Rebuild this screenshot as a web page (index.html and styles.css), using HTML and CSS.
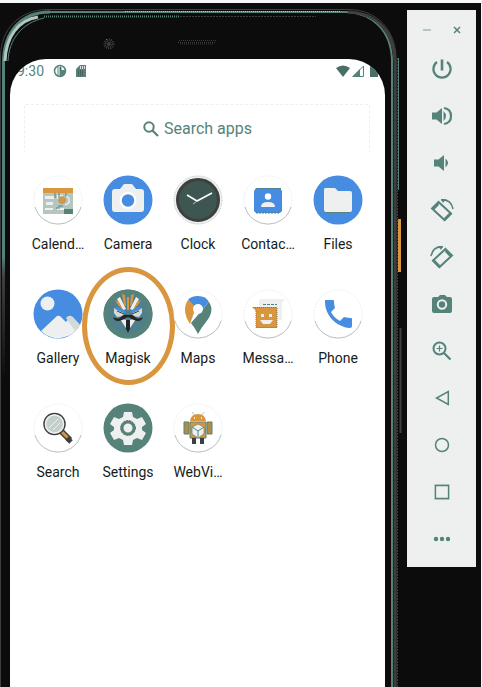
FILE: index.html
```html
<!DOCTYPE html>
<html lang="en">
<head>
<meta charset="utf-8">
<meta name="viewport" content="width=device-width, initial-scale=1">
<title>Android Emulator</title>
<link rel="stylesheet" href="styles.css">
</head>
<body>
<div class="desk">
  <div class="phone">
    <svg class="bezel" viewBox="0 0 407 684" aria-hidden="true" fill="none">
      <defs>
        <linearGradient id="fade" x1="0" y1="0" x2="0" y2="684" gradientUnits="userSpaceOnUse">
          <stop offset="0" stop-color="#55837a"/><stop offset=".37" stop-color="#55837a"/><stop offset=".4" stop-color="#3f3f3f"/><stop offset=".55" stop-color="#0c0c0c"/>
        </linearGradient>
      </defs>
      <path d="M.5 684V54C.5 26 20 6.500 48 6.500H348C378 6.500 396 28 396 56V684" stroke="#3f3f3f"/>
      <path d="M3.500 400V60C3.500 29 21 9 50 9" stroke="url(#fade)" stroke-width="3"/>
      <path d="M48 9H346C372 10 391 27 392 57V684" stroke="#55837a" stroke-width="2"/>
      <path d="M125 8.500H340" stroke="#b5c5c0" stroke-dasharray="1 1"/>
      <path d="M348 9C378 10 394 30 395 58V684" stroke="#3f3f3f" stroke-width="3"/>
      <path d="M397.500 684V54" stroke="#3f3f3f" stroke-dasharray="2 1"/>
      <path d="M398.500 55V187" stroke="#55837a"/>
      <path d="M44 13.500H180" stroke="#55837a" stroke-width="2" stroke-dasharray="1 1"/>
      <path d="M180 13.500H316" stroke="#3f3f3f" stroke-dasharray="2 1"/>
      <path d="M5 58C6 34 18 17 38 14" stroke="#b5c5c0" stroke-width="3"/>
      <path d="M8 58C9 36 22 20 44 15" stroke="#55837a"/>
      <circle cx="109" cy="41" r="4" stroke="#3f3f3f" stroke-width="3" stroke-dasharray="1 1"/>
      <circle cx="109" cy="41" r="2" fill="#3f3f3f"/>
      <path d="M106 36.500h1" stroke="#55837a"/>
      <path d="M179 37.500H217M178 39.500H216M180 41H214" stroke="#3f3f3f" stroke-dasharray="1 1"/>
      <path d="M399.500 216V269" stroke="#d9963f" stroke-width="3"/>
      <path d="M400.500 325V430" stroke="#3f3f3f" stroke-width="2"/>
    </svg>
    <main class="screen">
      <div class="status">
        <div class="status-side">
          <span>9:30</span>
          <svg class="status-icon" viewBox="0 0 14 14" aria-hidden="true"><circle cx="7" cy="7" r="5.500" fill="none" stroke="#55837a" stroke-width="1.500"/><path d="M5 2v10M7 3h1v9H7z" stroke="#55837a"/><path d="M7 6h5v3l-2 3H7z" fill="#55837a"/></svg>
          <svg class="status-icon sd" viewBox="0 0 14 14" aria-hidden="true"><path d="M6 1h6v12H2V5z" fill="#55837a"/><path d="M6.500 2v3M8.500 2v3M10.500 2v3" stroke="#fff" stroke-width=".8"/><path d="M4 7h6M4 9h6M4 11h6" stroke="#3f3f3f" stroke-dasharray="1 1"/></svg>
        </div>
        <div class="status-side">
          <svg class="status-icon" viewBox="0 0 14 14" aria-hidden="true"><path d="M0 4Q7-1 14 4L7 13z" fill="#496e67"/></svg>
          <svg class="status-icon" viewBox="0 0 14 14" aria-hidden="true"><path d="M2 12.500L12.500 2v10.500z" fill="none" stroke="#55837a"/><path d="M1 13L9 5v8z" fill="#55837a"/></svg>
          <svg class="status-icon" viewBox="0 0 14 14" aria-hidden="true"><path d="M4 2h2V1h4v1h2v11H4z" fill="#496e67"/></svg>
        </div>
      </div>
      <label class="search">
        <svg viewBox="0 0 18 18" aria-hidden="true"><circle cx="7" cy="7" r="4.700" fill="none" stroke="#55837a" stroke-width="2"/><path d="M10.500 10.500L16 16" stroke="#55837a" stroke-width="2.200"/></svg>
        <input type="text" placeholder="Search apps" aria-label="Search apps">
      </label>
      <div class="apps">
        <button class="app"><svg viewBox="0 0 50 50" aria-hidden="true"><circle class="disc" cx="25" cy="25" r="24"/><path class="rim" d="M2 32A24 24 0 0 0 48 32"/><path d="M10 13h30v26H10z" fill="#b5c5c0"/><path d="M10 13h30v5H10z" fill="#d9963f"/><path d="M12 21h9v3h-9zM13 27h7v3h-7zM24 20h6v4h-6zM12 33h8v2h-8zM24 33h7v2h-7z" fill="#eef0ef"/><path d="M22 18v5M26 18v5M33 18v4M25 31h5M23 33h4" stroke="#55837a"/><path d="M31 34h9v5h-9z" fill="#55837a"/><circle cx="29" cy="25" r="3.500" fill="#d9963f" stroke="#8c9a80" stroke-dasharray="1 1"/><path d="M33 21l3 2v5l-4 2" fill="none" stroke="#fff"/></svg><span>Calend…</span></button>
        <button class="app"><svg viewBox="0 0 50 50" aria-hidden="true"><circle cx="25" cy="25" r="24.500" fill="#468ce1"/><path d="M12 14h5l4-5h8l4 5h5q3 0 3 3v17q0 3-3 3H12q-3 0-3-3V17q0-3 3-3z" fill="#eef0ef"/><circle cx="25" cy="25.500" r="8.500" fill="#fff"/><circle cx="25" cy="25.500" r="6.200" fill="#468ce1"/></svg><span>Camera</span></button>
        <button class="app"><svg viewBox="0 0 50 50" aria-hidden="true"><circle cx="25" cy="25" r="24" fill="#eef0ef" stroke="#b5c5c0" stroke-dasharray="1 1"/><circle cx="25" cy="25" r="20.500" fill="#3d5651" stroke="#3f3f3f" stroke-width="3"/><path d="M14 20l10 6 15-8" fill="none" stroke="#fff" stroke-width="1.600"/><path d="M20 29l4-3" stroke="#b5c5c0"/></svg><span>Clock</span></button>
        <button class="app"><svg viewBox="0 0 50 50" aria-hidden="true"><circle class="disc" cx="25" cy="25" r="24"/><path class="rim" d="M2 32A24 24 0 0 0 48 32"/><path d="M13 13h24l2 3v20l-2 2H13l-2-2V16z" fill="#468ce1"/><path d="M13 13.500h25M13 38h24" stroke="#55837a" stroke-dasharray="2 1"/><circle cx="25" cy="21.500" r="3.200" fill="#fff"/><path d="M18 32q0-5 7-5t7 5z" fill="#eef0ef"/></svg><span>Contac…</span></button>
        <button class="app"><svg viewBox="0 0 50 50" aria-hidden="true"><circle cx="25" cy="25" r="24.500" fill="#468ce1"/><path d="M12 13h10l3 3h12q2 0 2 2v17q0 2-2 2H13q-2 0-2-2V14z" fill="#eef0ef"/><path d="M13 37.500h24" stroke="#55837a"/></svg><span>Files</span></button>

        <button class="app"><svg viewBox="0 0 50 50" aria-hidden="true"><circle cx="25" cy="25" r="24.500" fill="#468ce1"/><path d="M8 42L24 27q2-1 4 1l5 5 3-4q2-2 4 0l7 7A24.500 24.500 0 0 1 8 42z" fill="#eef0ef"/><path d="M33 29q3-4 7-1l7 8-5 6z" fill="#d3dad7"/><circle cx="14.500" cy="14.500" r="7" fill="#eef0ef"/></svg><span>Gallery</span></button>
        <button class="app marked"><svg viewBox="0 0 50 50" aria-hidden="true"><circle cx="25" cy="25" r="24.500" fill="#507f8c"/><circle cx="25" cy="25" r="22" fill="none" stroke="#55837a" stroke-width="5"/><path d="M14 10l3-2 6 12-3 1zM36 10l-3-2-6 12 3 1z" fill="#eef0ef"/><path d="M19 5l3 1 1 11-2-1zM31 5l-3 1-1 11 2-1zM24 8h2v13h-2zM12 11l4 2 4 8-5-5zM38 11l-4 2-4 8 5-5z" fill="#d9963f"/><path d="M11 19l10 5-1 3-6 1-3-4zM39 19l-10 5 1 3 6 1 3-4z" fill="#d3dad7"/><path d="M13 19l9 4M37 19l-9 4" stroke="#468ce1" stroke-width="3"/><path d="M14 22l7 3M36 22l-7 3" stroke="#3f3f3f"/><path d="M17 30l7 1-1 8zM33 30l-7 1 1 8z" fill="#eef0ef"/><path d="M25 26q-5-1-7 2-3 3-8 0 2 6 9 3l6-3 6 3q7 3 9-3-5 3-8 0-2-3-7-2z" fill="#242424"/><path d="M23 31h4v9l-2 4-2-4z" fill="#242424"/></svg><span>Magisk</span></button>
        <button class="app"><svg viewBox="0 0 50 50" aria-hidden="true"><circle class="disc" cx="25" cy="25" r="24"/><path class="rim" d="M2 32A24 24 0 0 0 48 32"/><path d="M15 11Q18 7 25 7q8 0 11 6l-9 10z" fill="#468ce1"/><path d="M15 11l8 7-6 17q-5-8-5-14t3-10z" fill="#d9963f"/><path d="M36 13q6 9-3 20-5 6-8 12-3-6-7-11z" fill="#55837a"/><circle cx="25" cy="20" r="5" fill="#fff"/></svg><span>Maps</span></button>
        <button class="app"><svg viewBox="0 0 50 50" aria-hidden="true"><circle class="disc" cx="25" cy="25" r="24"/><path class="rim" d="M2 32A24 24 0 0 0 48 32"/><path d="M18 10h24l-3 4v17H16V12z" fill="#eef0ef"/><path d="M20 15.500h14" stroke="#55837a" stroke-dasharray="3 1"/><path d="M9 18h25v21H13V22z" fill="#d9963f"/><path d="M10 18.500h24M13 22v16.500h21V18" fill="none" stroke="#8c7a46" stroke-dasharray="1 1"/><path d="M18 25h3v3h-3zM26 25h3v3h-3zM17 31h13l-3 4h-7z" fill="#eef0ef"/></svg><span>Messa…</span></button>
        <button class="app"><svg viewBox="0 0 50 50" aria-hidden="true"><circle class="disc" cx="25" cy="25" r="24"/><path class="rim" d="M2 32A24 24 0 0 0 48 32"/><path d="M12 11h8q1 0 1 1 0 4 1 7l-4 4q3 6 9 9l4-4q4 1 7 1 1 0 1 1v7q0 2-2 2C23 38 12 26 12 13z" fill="#468ce1"/></svg><span>Phone</span></button>

        <button class="app"><svg viewBox="0 0 50 50" aria-hidden="true"><circle class="disc" cx="25" cy="25" r="24"/><path class="rim" d="M2 32A24 24 0 0 0 48 32"/><path d="M28 28l9 9" stroke="#3f3f3f" stroke-width="6"/><path d="M28 28l8 8" stroke="#d9963f" stroke-width="3"/><path d="M34 35l4 4" stroke="#3f3f3f" stroke-width="5"/><circle cx="21.500" cy="21" r="10.500" fill="#c2cfcb" stroke="#3f3f3f" stroke-width="1.500"/><circle cx="21.500" cy="21" r="9" fill="none" stroke="#eef0ef" stroke-width="1.500"/><path d="M16 25l9-9M20 27l7-7" stroke="#eef0ef"/></svg><span>Search</span></button>
        <button class="app"><svg viewBox="0 0 50 50" aria-hidden="true"><circle cx="25" cy="25" r="24.500" fill="#55837a"/><path d="M21 9h8l1 5 4 2 5-2 4 7-4 3v3l4 3-4 7-5-2-4 2-1 5h-8l-1-5-4-2-5 2-4-7 4-3v-3l-4-3 4-7 5 2 4-2z" fill="#eef0ef"/><circle cx="25" cy="25" r="6" fill="#eef0ef" stroke="#55837a" stroke-width="3"/><circle cx="25" cy="25" r="7.500" fill="none" stroke="#3f3f3f" stroke-width=".6" stroke-dasharray="2 1"/></svg><span>Settings</span></button>
        <button class="app"><svg viewBox="0 0 50 50" aria-hidden="true"><circle class="disc" cx="25" cy="25" r="24"/><path class="rim" d="M2 32A24 24 0 0 0 48 32"/><path d="M19 9l3 4M31 9l-3 4" stroke="#b5c5c0"/><path d="M17 18q1-7 8-7t8 7z" fill="#d9963f"/><path d="M11 19h5v12h-5zM34 19h5v12h-5z" fill="#b38c45" stroke="#55837a"/><path d="M17 19h16v16H17z" fill="#d9963f" stroke="#55837a"/><path d="M19 35h4v6h-4zM27 35h4v6h-4z" fill="#3f3f3f"/><path d="M25 21l6 3v7l-6 4-6-4v-7z" fill="#eef0ef" stroke="#55837a" stroke-width=".7"/><path d="M19 24l6 4 6-4M25 28v6" fill="none" stroke="#55837a"/><path d="M21 15h1M28 15h1" stroke="#fff" stroke-width="1.500"/></svg><span>WebVi…</span></button>
      </div>
    </main>
  </div>

  <aside class="toolbar" aria-label="Emulator controls">
    <div class="window-controls">
      <button aria-label="Minimize"><svg viewBox="0 0 10 10"><path d="M1 5h8" stroke="#b5c5c0" stroke-width="2"/></svg></button>
      <button aria-label="Close"><svg viewBox="0 0 10 10"><path d="M2 2l6 6M8 2L2 8" stroke="#55837a" stroke-width="1.500"/></svg></button>
    </div>
    <button class="tool" aria-label="Power"><svg viewBox="0 0 24 24"><path d="M12 2.500v11" stroke-width="2.600"/><path d="M7 5a8.600 8.600 0 1 0 10 0" stroke-width="2.200"/></svg></button>
    <button class="tool" aria-label="Volume up"><svg viewBox="0 0 24 24"><path class="solid" d="M2 8.500h4.500L12 4v16l-5.500-4.500H2z"/><path class="solid" d="M13.500 7q5 5 0 10z"/><path d="M14 4q7 1 7 8t-7 8" stroke-width="2.200"/></svg></button>
    <button class="tool" aria-label="Volume down"><svg viewBox="0 0 24 24"><path class="solid" d="M4 8.500h4.500L14 4v16l-5.500-4.500H4z"/><path class="solid" d="M15.500 7.500q5 4.500 0 9z"/></svg></button>
    <button class="tool" aria-label="Rotate left"><svg viewBox="0 0 24 24"><path d="M8.500 4L2 10.500 14.500 22 21 15.500z" stroke-width="2"/><path d="M2 10l6-6 1 3-5 5zM20 14l2 2-7 7-2-2z" class="solid"/><path d="M11 2q10-1 12 9" stroke-width="1.600"/><path class="solid" d="M11 1h5l-3 4z"/></svg></button>
    <button class="tool" aria-label="Rotate right"><svg viewBox="0 0 24 24"><path d="M15.500 4L22 10.500 9.500 22 3 15.500z" stroke-width="2"/><path d="M22 10l-6-6-1 3 5 5zM4 14l-2 2 7 7 2-2z" class="solid"/><path d="M13 2Q3 1 1 11" stroke-width="1.600"/><path class="solid" d="M13 1H8l3 4z"/></svg></button>
    <button class="tool" aria-label="Take screenshot"><svg viewBox="0 0 24 24"><path class="solid" d="M4 5h4l2-2h5l2 2h3q2 0 2 2v12q0 2-2 2H4q-2 0-2-2V7q0-2 2-2z"/><circle cx="12" cy="12.500" r="4.200" class="lens"/></svg></button>
    <button class="tool" aria-label="Zoom"><svg viewBox="0 0 24 24"><circle cx="9.500" cy="9.500" r="6" stroke-width="2"/><path d="M14 14l6.500 6.500" stroke-width="2.200"/><path d="M9.500 6.500v6M6.500 9.500h6" stroke-width="1.200"/></svg></button>
    <button class="tool" aria-label="Back"><svg viewBox="0 0 24 24"><path d="M18.300 5.500v13L6.500 12z" stroke-width="1.500"/></svg></button>
    <button class="tool" aria-label="Home"><svg viewBox="0 0 24 24"><circle cx="12" cy="12" r="6.500" stroke-width="1.500"/></svg></button>
    <button class="tool" aria-label="Overview"><svg viewBox="0 0 24 24"><path d="M5.500 5.500h13v13h-13z" stroke-width="1.300"/><path d="M4.500 4.500h15v15h-15z" stroke-width=".5" stroke-dasharray="1 1"/></svg></button>
    <button class="tool" aria-label="More"><svg viewBox="0 0 24 24"><g class="solid"><circle cx="6" cy="12" r="2.200"/><circle cx="12" cy="12" r="2.200"/><circle cx="18" cy="12" r="2.200"/></g></svg></button>
  </aside>
</div>
</body>
</html>
```
FILE: styles.css
```css
*,
*::before,
*::after {
  box-sizing: border-box;
}

body {
  margin: 0;
  background: #f7f9fa;
  font-family: Roboto, "Liberation Sans", sans-serif;
  color: #141c1a;
}

button {
  padding: 0;
  border: 0;
  background: none;
  font: inherit;
  color: inherit;
  cursor: pointer;
}

svg {
  display: block;
}

.desk {
  display: flex;
  align-items: flex-start;
  min-height: calc(100vh - 3px);
  margin: 3px 1px 0 0;
  padding-right: 5px;
  background: #0c0c0c;
  overflow: hidden;
}

.phone {
  position: relative;
  display: flex;
  flex: 1;
  align-self: stretch;
  padding: 56px 22px 0 10px;
}

.bezel {
  position: absolute;
  top: 0;
  left: 0;
  width: 100%;
}

.screen {
  position: relative;
  flex: 1;
  min-width: 0;
  border-radius: 36px 36px 0 0;
  background: #fff;
}

/* Clips the clock and battery to the rounded screen corners */
.status {
  display: flex;
  align-items: center;
  justify-content: space-between;
  height: 24px;
  padding: 0 5px 0 7px;
  font-size: 14px;
  color: #55837a;
  clip-path: inset(0 0 -12px 0 round 36px 36px 0 0);
}

.status-side {
  display: flex;
  align-items: center;
  gap: 1px;
}

.status-side span {
  margin-right: 8px;
}

.status-icon {
  width: 14px;
  height: 14px;
}

.sd {
  margin-left: 6px;
}

.search {
  display: flex;
  align-items: center;
  justify-content: center;
  gap: 4px;
  height: 48px;
  margin: 21px 15px 0 14px;
  border: 1px dashed #eef0ef;
  border-bottom: 0;
  border-radius: 2px;
}

.search svg {
  width: 18px;
  height: 18px;
}

.search input {
  width: 88px;
  padding: 0;
  border: 0;
  outline: 0;
  background: none;
  font: inherit;
  font-size: 16px;
  color: #55837a;
}

.search input::placeholder {
  color: #55837a;
  opacity: 1;
}

.apps {
  display: grid;
  grid-template-columns: repeat(5, 1fr);
  row-gap: 35px;
  margin: 23px 12px 0 13px;
}

.app {
  position: relative;
  display: flex;
  flex-direction: column;
  align-items: center;
  gap: 9px;
  font-size: 14px;
  line-height: 20px;
}

.app svg {
  width: 50px;
  height: 50px;
}

.disc {
  fill: #fff;
  stroke: #eef0ef;
  stroke-dasharray: 2 1;
}

.rim {
  fill: none;
  stroke: #b5c5c0;
}

.marked::after {
  content: "";
  position: absolute;
  top: -22px;
  left: 50%;
  width: 93px;
  height: 118px;
  margin-left: -46px;
  border: 5px solid #d9963f;
  border-radius: 50%;
  pointer-events: none;
}

.toolbar {
  display: flex;
  flex-direction: column;
  width: 69px;
  margin-top: 7px;
  padding-bottom: 5px;
  background: #eef0ef;
}

.window-controls {
  display: flex;
  justify-content: center;
  gap: 20px;
  height: 35px;
  padding-top: 15px;
}

.window-controls svg {
  width: 10px;
  height: 10px;
}

.window-controls button {
  height: 10px;
}

.tool {
  display: grid;
  place-items: center;
  height: 47px;
}

.tool svg {
  width: 24px;
  height: 24px;
  fill: none;
  stroke: #55837a;
}

.tool .solid {
  fill: #55837a;
  stroke: none;
}

.tool .lens {
  fill: #55837a;
  stroke: #eef0ef;
  stroke-width: 2px;
}
```
